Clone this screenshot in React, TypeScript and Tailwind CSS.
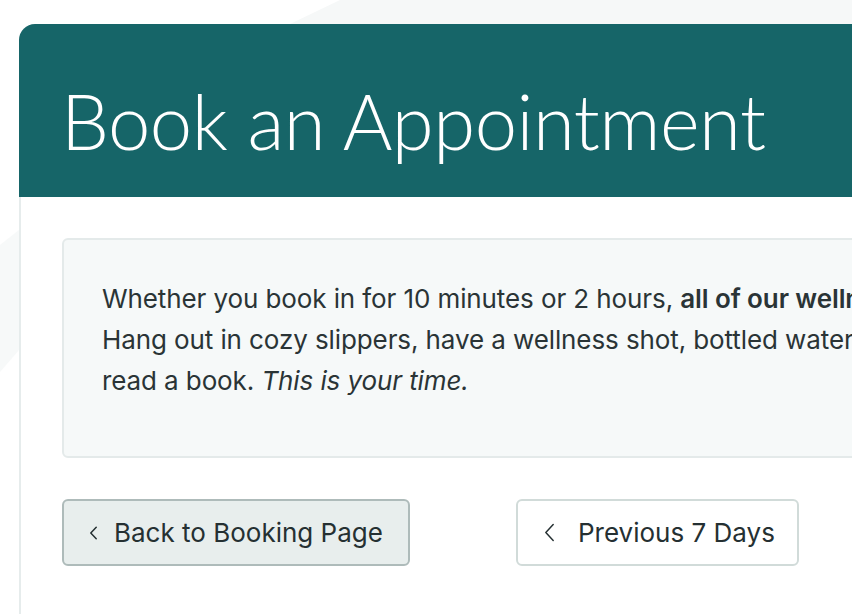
import React from 'react';

const Chevron: React.FC<{ className?: string; stroke?: number }> = ({ className, stroke = 1.6 }) => (
  <svg viewBox="0 0 10 18" className={className} fill="none" stroke="currentColor" strokeWidth={stroke} strokeLinecap="round" strokeLinejoin="round">
    <path d="M8.5 1.5 1.5 9l7 7.5" />
  </svg>
);

const App: React.FC = () => {
  return (
    <div className="relative w-[852px] h-[614px] overflow-hidden bg-white font-['Inter','Noto_Sans',sans-serif] text-[#2a3436]">
      {/* faint background shapes */}
      <svg className="absolute inset-0 w-full h-full" viewBox="0 0 852 614" preserveAspectRatio="none">
        <polygon points="290,24 340,0 852,0 852,24" fill="#f6f8f8" />
        <polygon points="0,245 19,230 19,350 0,372" fill="#f7f9f9" />
      </svg>

      <div className="relative ml-[19px] mt-[24px] w-[1200px]">
        <header className="bg-[#166568] rounded-tl-[16px] h-[173px] pl-[42px] pt-[24px] flex items-center">
          <h1 className="text-white font-['Lato',sans-serif] font-light text-[76px] leading-none tracking-[-0.5px] pb-[4px]">
            Book an Appointment
          </h1>
        </header>

        <div className="border-l-2 border-[#e6ecec] bg-white pl-[41px] pt-[41px] pb-[60px]">
          <div className="border-2 border-[#e4eaea] rounded-[6px] bg-[#f6f9f9] pl-[38px] pr-8 pt-[38px] pb-[55px] text-[26px] leading-[41px] tracking-[-0.1px]">
            <p className="whitespace-nowrap">
              Whether you book in for 10 minutes or 2 hours, <b className="font-semibold">all of our wellness amenities are included.</b>
              <br />
              Hang out in cozy slippers, have a wellness shot, bottled water or tea, relax in the lounge, or
              <br />
              read a book. <i>This is your time.</i>
            </p>
          </div>

          <div className="flex items-center mt-[41px] text-[26px]">
            <button className="flex items-center h-[67px] w-[348px] rounded-[6px] border-2 border-[#aebbba] bg-[#e8eeed] pl-[25px] text-[#253032]">
              <Chevron className="w-[9px] h-[14px] mr-[16px]" stroke={1.9} />
              Back to Booking Page
            </button>
            <button className="flex items-center h-[67px] w-[283px] ml-[106px] rounded-[6px] border-2 border-[#d1dbd9] bg-white pl-[26px] text-[#253032]">
              <Chevron className="w-[11px] h-[19px] mr-[23px]" stroke={1.4} />
              Previous 7 Days
            </button>
          </div>
        </div>
      </div>
    </div>
  );
};

export default App;
